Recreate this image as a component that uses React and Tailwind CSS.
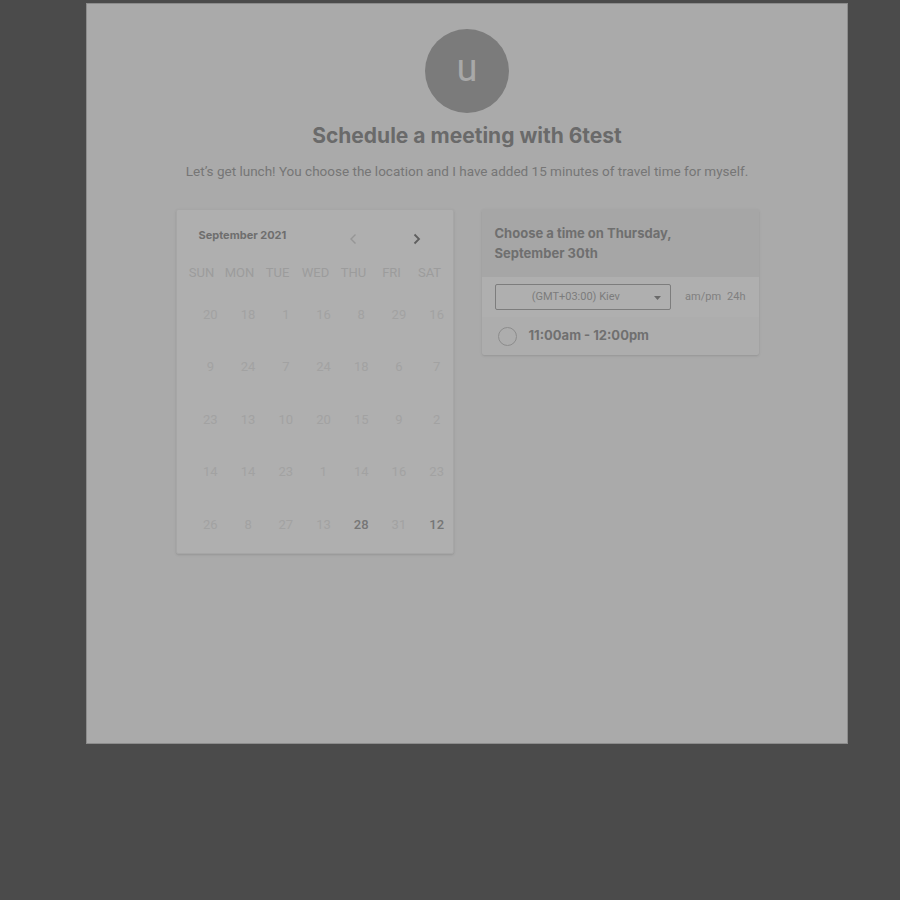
const weekdays = ['SUN', 'MON', 'TUE', 'WED', 'THU', 'FRI', 'SAT'];

const weeks = [
    ['20', '18', '1', '16', '8', '29', '16'],
    ['9', '24', '7', '24', '18', '6', '7'],
    ['23', '13', '10', '20', '15', '9', '2'],
    ['14', '14', '23', '1', '14', '16', '23'],
    ['26', '8', '27', '13', '28', '31', '12'],
];

const Calendar = () => (
    <div className="w-[278px] h-[345px] bg-[#afafaf] border border-[#a6a6a6] rounded-[2px] shadow-sm">
        {/* Month header */}
        <div className="flex items-center h-[52px] pl-[22px] pr-[32px]">
            <span className="font-['Inter'] font-bold text-[11px] text-[#6e6e6e] -mt-[1px]">September 2021</span>
            <div className="ml-auto flex items-center gap-[54px]">
                <svg width="9" height="12" viewBox="0 0 9 12" className="mt-[6px]">
                    <path d="M6.5 1.5 L2 6 L6.5 10.5" fill="none" stroke="#969696" strokeWidth="1.4" />
                </svg>
                <svg width="9" height="12" viewBox="0 0 9 12" className="mt-[6px]">
                    <path d="M2.5 1.5 L7 6 L2.5 10.5" fill="none" stroke="#5e5e5e" strokeWidth="1.8" />
                </svg>
            </div>
        </div>

        {/* Weekdays */}
        <div className="grid grid-cols-7 w-[266px] ml-[6px] font-['Roboto'] text-[13px] text-[#9c9c9c] h-[22px] items-center">
            {weekdays.map((d) => (
                <div key={d} className="text-center">{d}</div>
            ))}
        </div>

        {/* Days */}
        <div className="ml-[15px] w-[264px] mt-[4px]">
            {weeks.map((row, i) => (
                <div key={i} className="grid grid-cols-7 h-[52.6px] items-center font-['Roboto'] text-[13px]">
                    {row.map((d, j) => (
                        <div
                            key={j}
                            className={
                                i === 4 && (j === 4 || j === 6)
                                    ? 'text-center text-[#767676] font-medium'
                                    : 'text-center text-[#a2a2a2]'
                            }
                        >
                            {d}
                        </div>
                    ))}
                </div>
            ))}
        </div>
    </div>
);

const TimePicker = () => (
    <div className="w-[277px] bg-[#adadad] rounded-[2px] shadow-sm overflow-hidden">
        <div className="bg-[#a6a6a6] h-[68px] px-[13px] pt-[14px] font-['Inter'] font-bold text-[13px] leading-[20px] text-[#6f6f6f]">
            Choose a time on Thursday,<br />
            September 30th
        </div>
        <div className="bg-[#afafaf] flex items-center h-[40px] px-[13px]">
            <div className="relative w-[177px] h-[26px] border border-[#7d7d7d] rounded-[2px] flex items-center justify-center font-['Roboto'] text-[11px] text-[#7c7c7c]">
                <span className="-ml-[14px]">(GMT+03:00) Kiev</span>
                <svg width="7" height="4" viewBox="0 0 7 4" className="absolute right-[9px] top-[11px]">
                    <path d="M0 0 L7 0 L3.5 4 Z" fill="#6a6a6a" />
                </svg>
            </div>
            <div className="ml-[14px] flex gap-[6px] font-['Roboto'] text-[11px] text-[#808080]">
                <span>am/pm</span>
                <span>24h</span>
            </div>
        </div>
        <div className="flex items-center h-[38px] px-[16px] gap-[12px]">
            <div className="w-[19px] h-[19px] rounded-full border-[1.5px] border-[#8c8c8c]"></div>
            <span className="font-['Inter'] font-bold text-[13px] text-[#707070]">11:00am - 12:00pm</span>
        </div>
    </div>
);

const App = () => {
    return (
        <div className="w-[900px] h-[900px] bg-[#4b4b4b] pt-[3px]">
            <div className="ml-[86px] w-[762px] h-[741px] bg-[#aaaaaa] border border-[#8c8c8c] flex flex-col items-center">
                {/* Avatar */}
                <div className="mt-[25px] w-[84px] h-[84px] rounded-full bg-[#7b7b7b] flex items-center justify-center">
                    <span className="font-['Roboto'] text-[38px] leading-none text-[#a8a8a8] -mt-[6px]">u</span>
                </div>

                <h1 className="mt-[8px] font-['Inter'] font-bold text-[21px] leading-[30px] text-[#6a6a6a]">
                    Schedule a meeting with 6test
                </h1>
                <p className="mt-[11px] font-['Roboto'] text-[13.5px] leading-[18px] text-[#767676]">
                    Let’s get lunch! You choose the location and I have added 15 minutes of travel time for myself.
                </p>

                <div className="mt-[29px] flex items-start gap-[28px]">
                    <Calendar />
                    <TimePicker />
                </div>
            </div>
        </div>
    );
};

export default App;
